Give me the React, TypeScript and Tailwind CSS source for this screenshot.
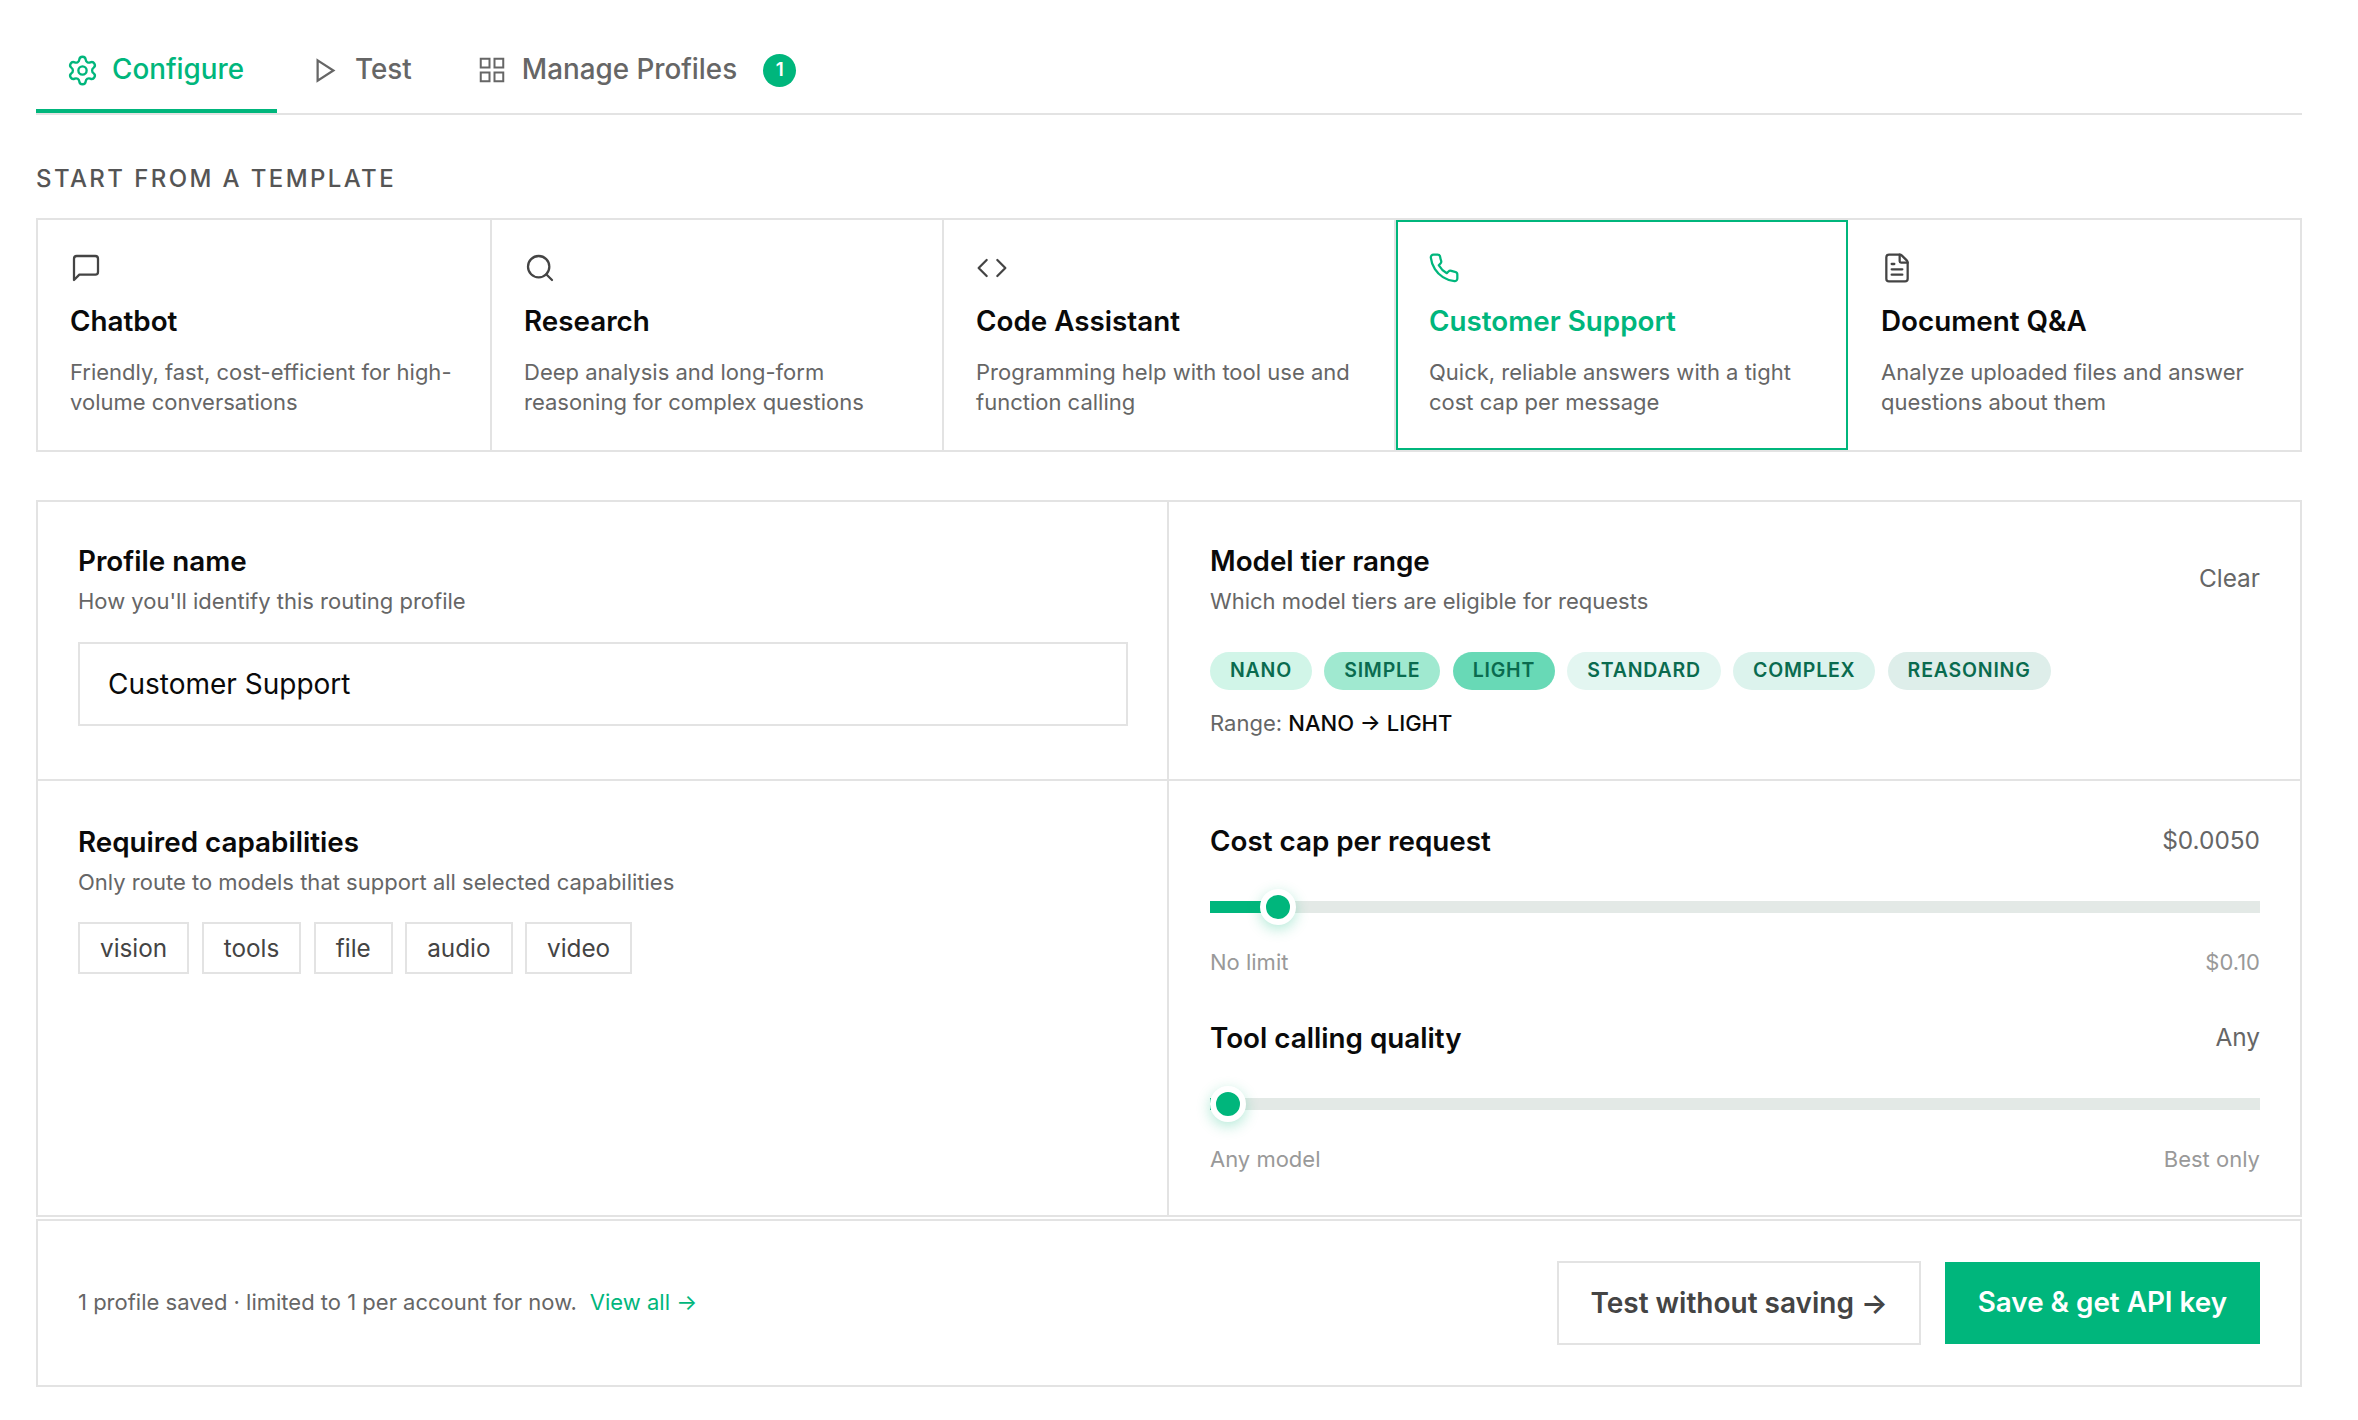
import { Settings, Search, Code, FileText } from "lucide-react";

function PlayIcon() {
  return (
    <svg width="27" height="27" viewBox="0 0 24 24" fill="none" stroke="currentColor" strokeWidth="2">
      <polygon points="5 3 19 12 5 21 5 3" />
    </svg>
  );
}

function GridIcon() {
  return (
    <svg width="30" height="30" viewBox="0 0 24 24" fill="none" stroke="currentColor" strokeWidth="1.6">
      <rect x="3" y="3" width="7" height="7" />
      <rect x="14" y="3" width="7" height="7" />
      <rect x="3" y="14" width="7" height="7" />
      <rect x="14" y="14" width="7" height="7" />
    </svg>
  );
}

function ChatIcon({ className }: { className?: string }) {
  return (
    <svg width="32" height="32" viewBox="0 0 24 24" fill="none" stroke="currentColor" strokeWidth="1.7" strokeLinejoin="round" className={className}>
      <path d="M21 15a2 2 0 0 1-2 2H7l-4 4V5a2 2 0 0 1 2-2h14a2 2 0 0 1 2 2z" />
    </svg>
  );
}

function PhoneIcon({ className }: { className?: string }) {
  return (
    <svg width="34" height="32" viewBox="0 0 24 24" fill="none" stroke="currentColor" strokeWidth="1.7" strokeLinejoin="round" className={`-ml-[2px] ${className}`}>
      <path d="M22 16.92v3a2 2 0 0 1-2.18 2 19.79 19.79 0 0 1-8.63-3.07 19.5 19.5 0 0 1-6-6 19.79 19.79 0 0 1-3.07-8.67A2 2 0 0 1 4.11 2h3a2 2 0 0 1 2 1.72 12.84 12.84 0 0 0 .7 2.81 2 2 0 0 1-.45 2.11L8.09 9.91a16 16 0 0 0 6 6l1.27-1.27a2 2 0 0 1 2.11-.45 12.84 12.84 0 0 0 2.81.7A2 2 0 0 1 22 16.92z" />
    </svg>
  );
}

const templates = [
  { icon: ChatIcon, title: "Chatbot", desc: "Friendly, fast, cost-efficient for high-volume conversations", box: "border-r-2 border-[#e3e3e3] px-[32px] pt-[32px]" },
  { icon: Search, title: "Research", desc: "Deep analysis and long-form reasoning for complex questions", box: "border-r-2 border-[#e3e3e3] px-[32px] pt-[32px]" },
  { icon: Code, title: "Code Assistant", desc: "Programming help with tool use and function calling", box: "border-r-2 border-[#e3e3e3] px-[32px] pt-[32px]" },
  { icon: PhoneIcon, title: "Customer Support", desc: "Quick, reliable answers with a tight cost cap per message", box: "border-2 border-[#00b67c] px-[31px] pt-[30px]", active: true },
  { icon: FileText, title: "Document Q&A", desc: "Analyze uploaded files and answer questions about them", box: "pl-[33px] pr-[30px] pt-[32px]" },
];

const tiers = [
  { name: "NANO", bg: "bg-[#d1f5e8]" },
  { name: "SIMPLE", bg: "bg-[#a0e9d0]" },
  { name: "LIGHT", bg: "bg-[#68d9b6]" },
  { name: "STANDARD", bg: "bg-[#e3f6f1]" },
  { name: "COMPLEX", bg: "bg-[#dcf3ed]" },
  { name: "REASONING", bg: "bg-[#deeeea]" },
];

const caps = ["vision", "tools", "file", "audio", "video"];

function Slider({ label, value, left, right, pos }: { label: string; value: string; left: string; right: string; pos: number }) {
  return (
    <div>
      <div className="flex h-[36px] items-center justify-between">
        <span className="text-[27.8px] font-semibold text-[#0a0a0a]">{label}</span>
        <span className="pb-[4px] text-[24.4px] text-[#666666]">{value}</span>
      </div>
      <div className="relative mt-[41px] h-[12px] bg-[#e3e9e6]">
        <div className="h-full bg-[#00b67c]" style={{ width: pos }} />
        <div
          className="absolute top-[-12px] h-[36px] w-[36px] -translate-x-1/2 rounded-full border-[6px] border-white bg-[#00b67c] shadow-[0_4px_14px_rgba(0,182,124,0.3)]"
          style={{ left: pos }}
        />
      </div>
      <div className="mt-[35px] flex h-[28px] items-center justify-between text-[22px] text-[#999999]">
        <span>{left}</span>
        <span>{right}</span>
      </div>
    </div>
  );
}

export default function App() {
  return (
    <div className="min-h-[1420px] bg-white pl-[36px] pr-[56px] pt-[29px] font-['Inter',sans-serif]">
      <div className="flex h-[86px] border-b-2 border-[#e3e3e3] text-[27.8px] font-medium">
        <div className="flex items-center gap-[13px] border-b-4 border-[#00b67c] pl-[30px] pr-[33px] pt-[2px] text-[#00b67c]">
          <Settings size={33} strokeWidth={1.7} />
          Configure
        </div>
        <div className="flex items-center gap-[16px] border-b-4 border-transparent pl-[35px] pr-[33px] pt-[2px] text-[#666666]">
          <PlayIcon />
          Test
        </div>
        <div className="flex items-center gap-[15px] border-b-4 border-transparent pl-[32px] pt-[2px] text-[#666666]">
          <GridIcon />
          Manage Profiles
          <span className="ml-[11px] flex h-[33px] w-[33px] items-center justify-center rounded-full bg-[#00b67c] text-[19px] font-semibold text-white">1</span>
        </div>
      </div>

      <div className="mt-[48px] h-[32px] text-[24px] font-medium leading-[32px] tracking-[2.4px] text-[#555555]">START FROM A TEMPLATE</div>

      <div className="mt-[23px] grid h-[234px] grid-cols-[454px_452px_452px_452px_1fr] border-2 border-[#e3e3e3]">
        {templates.map((t) => (
          <div key={t.title} className={t.box}>
            <t.icon size={32} strokeWidth={1.7} className={t.active ? "text-[#00b67c]" : "text-[#444444]"} />
            <div className={`mt-[19px] text-[27.8px] font-semibold leading-[36px] ${t.active ? "text-[#00b67c]" : "text-[#0a0a0a]"}`}>{t.title}</div>
            <p className="mt-[18px] text-[22px] leading-[30px] text-[#666666]">{t.desc}</p>
          </div>
        ))}
      </div>

      <div className="mt-[48px] grid grid-cols-2 grid-rows-[279px_434px] border-2 border-[#e3e3e3]">
        <div className="border-r-2 border-b-2 border-[#e3e3e3] pl-[40px] pr-[39px] pt-[41px]">
          <div className="text-[27.8px] font-semibold leading-[36px] text-[#0a0a0a]">Profile name</div>
          <div className="mt-[7px] text-[22px] leading-[30px] text-[#666666]">How you'll identify this routing profile</div>
          <input
            readOnly
            value="Customer Support"
            className="mt-[26px] h-[84px] w-full border-2 border-[#e3e3e3] px-[28px] text-[28px] text-[#0a0a0a] outline-none"
          />
        </div>
        <div className="border-b-2 border-[#e3e3e3] pl-[41px] pr-[40px] pt-[41px]">
          <div className="flex items-center justify-between">
            <div>
              <div className="text-[27.8px] font-semibold leading-[36px] text-[#0a0a0a]">Model tier range</div>
              <div className="mt-[7px] text-[22px] leading-[30px] text-[#666666]">Which model tiers are eligible for requests</div>
            </div>
            <span className="pb-[2px] text-[24.4px] text-[#666666]">Clear</span>
          </div>
          <div className="mt-[36px] flex gap-[12.2px]">
            {tiers.map((t) => (
              <span key={t.name} className={`flex h-[38px] items-center rounded-full px-[20px] text-[19.5px] font-semibold tracking-[0.8px] text-[#0a6b4f] ${t.bg}`}>
                {t.name}
              </span>
            ))}
          </div>
          <div className="mt-[18px] text-[22px] leading-[30px] text-[#666666]">
            Range: <span className="font-medium text-[#0a0a0a]">NANO → LIGHT</span>
          </div>
        </div>
        <div className="border-r-2 border-[#e3e3e3] pl-[40px] pr-[39px] pt-[43px]">
          <div className="text-[27.8px] font-semibold leading-[36px] text-[#0a0a0a]">Required capabilities</div>
          <div className="mt-[7px] text-[22px] leading-[30px] text-[#666666]">Only route to models that support all selected capabilities</div>
          <div className="mt-[25px] flex gap-[12.5px]">
            {caps.map((c) => (
              <span key={c} className="flex h-[52px] items-center border-2 border-[#e3e3e3] px-[20px] text-[24.3px] text-[#444444]">{c}</span>
            ))}
          </div>
        </div>
        <div className="pl-[41px] pr-[40px] pt-[43px]">
          <Slider label="Cost cap per request" value="$0.0050" left="No limit" right="$0.10" pos={68} />
          <div className="mt-[45px]">
            <Slider label="Tool calling quality" value="Any" left="Any model" right="Best only" pos={18} />
          </div>
        </div>
      </div>

      <div className="mt-[2px] flex h-[168px] items-center justify-between border-2 border-[#e3e3e3] pl-[40px] pr-[40px]">
        <div className="pb-[2px] text-[22px] text-[#666666]">
          1 profile saved · limited to 1 per account for now.<span className="ml-[13px] text-[#00b67c]">View all →</span>
        </div>
        <div className="flex gap-[24px]">
          <button className="h-[84px] border-2 border-[#e3e3e3] px-[31px] text-[28px] font-semibold text-[#444444]">Test without saving →</button>
          <button className="h-[82px] self-center bg-[#00b67c] px-[33px] text-[27.8px] font-semibold text-white">Save &amp; get API key</button>
        </div>
      </div>
    </div>
  );
}
